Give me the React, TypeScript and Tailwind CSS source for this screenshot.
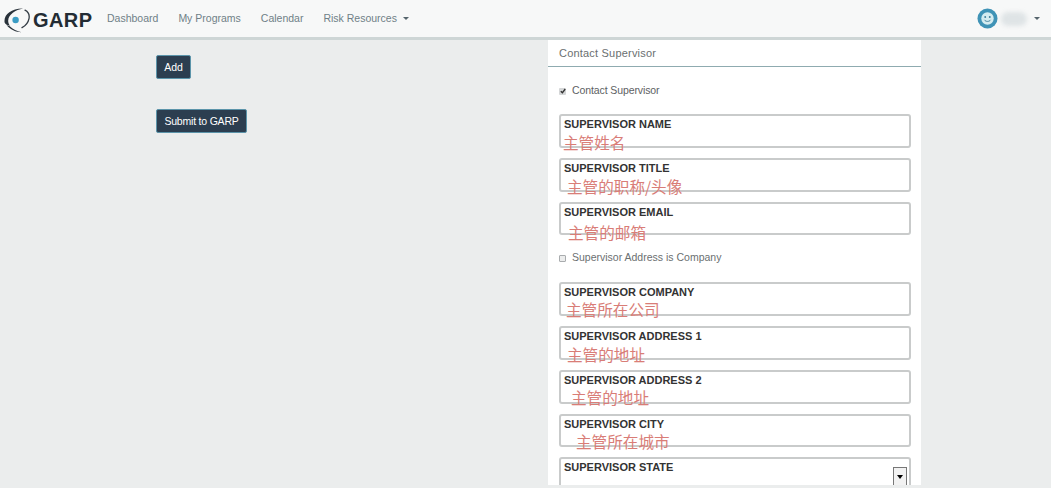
const sans = "font-['Liberation_Sans',Arial,sans-serif]";

interface Field {
  label: string;
  note?: string;
  noteClass?: string;
}

const topFields: Field[] = [
  { label: "SUPERVISOR NAME", note: "主管姓名", noteClass: "left-[2px] top-[16px]" },
  { label: "SUPERVISOR TITLE", note: "主管的职称/头像", noteClass: "left-[6px] top-[16px]" },
  { label: "SUPERVISOR EMAIL", note: "主管的邮箱", noteClass: "left-[7px] top-[18px]" },
];

const bottomFields: Field[] = [
  { label: "SUPERVISOR COMPANY", note: "主管所在公司", noteClass: "left-[5px] top-[15px]" },
  { label: "SUPERVISOR ADDRESS 1", note: "主管的地址", noteClass: "left-[6px] top-[16px]" },
  { label: "SUPERVISOR ADDRESS 2", note: "主管的地址", noteClass: "left-[10px] top-[15px]" },
  { label: "SUPERVISOR CITY", note: "主管所在城市", noteClass: "left-[15px] top-[15px]" },
];

const Logo = () => (
  <svg width="26" height="25" viewBox="0 0 26 25" className="mt-[3px] shrink-0">
    <path d="M0.6 14.5C-0.6 7 7 0.4 19 0.6C11.5 2 4.4 6.6 4.2 12.6C4.1 14.6 4.8 16.4 6 17.8C3.4 17.4 1.4 16.2 0.6 14.5Z" fill="#29323a" />
    <path d="M2.6 17C6 21.6 12 24.2 17.6 24.2C13 23.2 8.6 21.2 5.8 18.2Z" fill="#29323a" />
    <path d="M21 2.2C24.6 4 25.6 7.4 25 10.6C24.2 14.8 21 18 18 19.6" stroke="#333c44" strokeWidth="1.3" fill="none" strokeLinecap="round" />
    <circle cx="11.6" cy="12" r="3.2" fill="#3a9cc4" />
  </svg>
);

const Smiley = () => (
  <svg width="21" height="21" viewBox="0 0 22 22" className="shrink-0">
    <circle cx="11" cy="11" r="10.5" fill="#3f93b6" />
    <circle cx="11" cy="11" r="6.5" fill="#d4ecf0" />
    <circle cx="8.6" cy="9.4" r="1" fill="#3f7f99" />
    <circle cx="13.4" cy="9.4" r="1" fill="#3f7f99" />
    <path d="M7.8 12.4C9 14.6 13 14.6 14.2 12.4" stroke="#3f7f99" strokeWidth="1" fill="none" />
  </svg>
);

const Caret = () => (
  <span className="inline-block h-0 w-0 border-x-[3px] border-t-[3px] border-x-transparent border-t-[#55646c]" />
);

const FieldBox = ({ label, note, noteClass }: Field) => (
  <div className="relative h-[33.75px] rounded-[3px] border-2 border-[#c9cbcb] bg-white px-[3px] text-[11px] leading-[16px] font-bold text-[#333]">
    {label}
    {note && (
      <span
        className={`absolute whitespace-nowrap font-['Noto_Sans_CJK_SC',sans-serif] text-[15.6px] leading-[20px] font-normal text-[#d97d77] ${noteClass}`}
      >
        {note}
      </span>
    )}
  </div>
);

const App = () => {
  return (
    <div className={`flex h-[488px] w-full flex-col overflow-hidden bg-[#ebeded] ${sans}`}>
      <nav className="flex h-[40px] shrink-0 items-center border-b-[3px] border-[#ced6d6] bg-[#f7f8f8] pr-[11px] pl-[4px]">
        <Logo />
        <span className="mt-[3px] ml-[3px] w-[74px] text-[20px] leading-none font-bold tracking-[0.4px] text-[#232c34]">
          GARP
        </span>
        <div className="flex items-center gap-[20px] text-[10.5px] text-[#6f8087]">
          <span>Dashboard</span>
          <span>My Programs</span>
          <span>Calendar</span>
          <span className="flex items-center gap-[6px]">
            Risk Resources <Caret />
          </span>
        </div>
        <div className="ml-auto flex items-center">
          <Smiley />
          <span className="ml-[3px] h-[14px] w-[26px] rounded-full bg-[#dfe4e6] blur-[2px]" />
          <span className="ml-[7px] flex">
            <Caret />
          </span>
        </div>
      </nav>

      <main className="flex min-h-0 flex-1">
        <div className="flex w-[548px] shrink-0 flex-col items-start gap-[30px] pt-[15px] pl-[156px]">
          <button className="h-[24px] w-[35px] rounded-[2px] border border-[#5b94aa] bg-[#2c3e50] pt-px text-[10.5px] text-white">
            Add
          </button>
          <button className="h-[24px] w-[91px] rounded-[2px] border border-[#5b94aa] bg-[#2c3e50] pt-px text-[10.5px] tracking-[-0.2px] text-white">
            Submit to GARP
          </button>
        </div>

        <section className="mb-[3px] w-[373px] shrink-0 overflow-hidden bg-white">
          <h2 className="h-[27px] border-b border-[#8fabb0] pt-[6px] pl-[11px] text-[11px] leading-[14px] font-normal tracking-[0.2px] text-[#6a6f70]">
            Contact Supervisor
          </h2>
          <div className="pt-[17px] pr-[10px] pl-[11px]">
            <label className="flex h-[14px] items-center gap-[6px] text-[10.5px] tracking-[-0.1px] text-[#5d6163]">
              <span className="flex h-[7px] w-[7px] shrink-0 items-center justify-center rounded-[1px] bg-[#d4d6d7]">
                <svg width="6" height="6" viewBox="0 0 6 6" fill="none">
                  <path d="M0.8 3.2L2.4 4.8L5.2 1" stroke="#333" strokeWidth="1.4" />
                </svg>
              </span>
              Contact Supervisor
            </label>
            <div className="mt-[16px] flex flex-col gap-[10px]">
              {topFields.map((field) => (
                <FieldBox key={field.label} {...field} />
              ))}
            </div>
            <label className="mt-[16px] flex h-[14px] items-center gap-[6px] text-[10.5px] text-[#6b6f71]">
              <span className="h-[7px] w-[7px] shrink-0 rounded-[1px] border border-[#a9acae] bg-[#eceded]" />
              Supervisor Address is Company
            </label>
            <div className="mt-[17px] flex flex-col gap-[10px]">
              {bottomFields.map((field) => (
                <FieldBox key={field.label} {...field} />
              ))}
              <div className="relative h-[34px] rounded-[3px] border-2 border-[#c9cbcb] bg-white px-[3px] text-[11px] leading-[16px] font-bold text-[#333]">
                SUPERVISOR STATE
                <span className="absolute top-[8px] right-[2px] flex h-[20px] w-[14px] items-center justify-center border border-[#777] bg-[#f2f2f2]">
                  <span className="h-0 w-0 border-x-[3px] border-t-[4px] border-x-transparent border-t-black" />
                </span>
              </div>
            </div>
          </div>
        </section>
      </main>
    </div>
  );
};

export default App;
